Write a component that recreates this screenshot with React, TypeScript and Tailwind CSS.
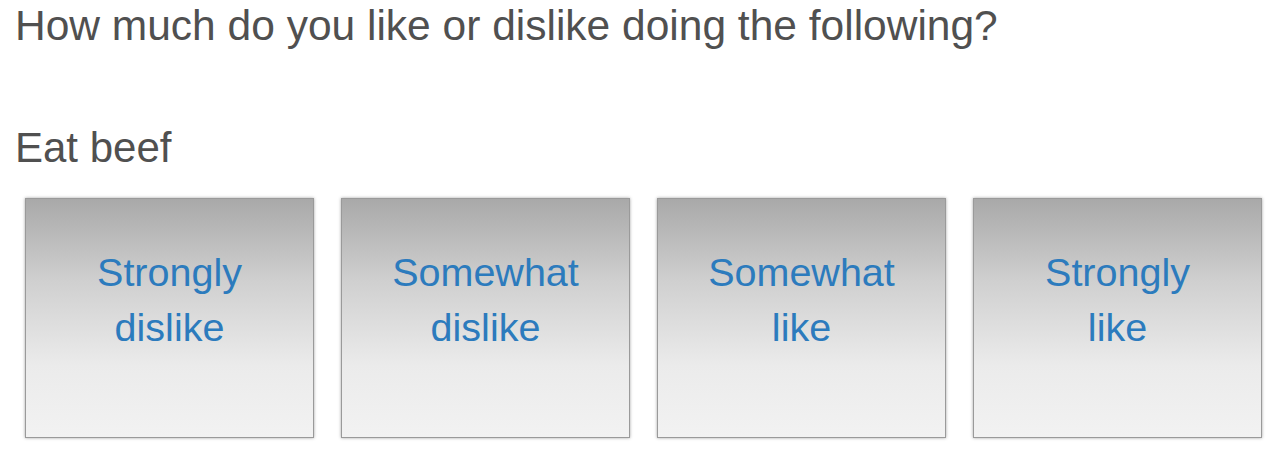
import React from "react";

const options = [
  ["Strongly", "dislike"],
  ["Somewhat", "dislike"],
  ["Somewhat", "like"],
  ["Strongly", "like"],
];

export default function App() {
  return (
    <div
      className="w-[1280px] h-[461px] bg-white overflow-hidden"
      style={{ fontFamily: '"Liberation Sans", Arial, sans-serif' }}
    >
      <div className="pl-[15px] pt-[2px] text-[42.5px] leading-[48px] text-[#505050] whitespace-nowrap">
        How much do you like or dislike doing the following?
      </div>
      <div className="pl-[15px] pt-[74px] text-[42px] leading-[48px] text-[#505050] whitespace-nowrap">
        Eat beef
      </div>
      <div className="flex gap-[27px] pl-[25px] pt-[26px]">
        {options.map((o, i) => (
          <div
            key={i}
            className="w-[289px] h-[240px] border border-[#9a9a9a] shadow-[0_0_3px_rgba(0,0,0,0.35)] bg-[linear-gradient(to_bottom,#a9a9a9_0%,#d0d0d0_35%,#ebebeb_70%,#f2f2f2_100%)] flex flex-col items-center pt-[46px] text-[39.5px] leading-[55px] text-[#2c7bbd]"
          >
            {o.map((t, j) => (
              <div key={j} className="whitespace-nowrap">
                {t}
              </div>
            ))}
          </div>
        ))}
      </div>
    </div>
  );
}
